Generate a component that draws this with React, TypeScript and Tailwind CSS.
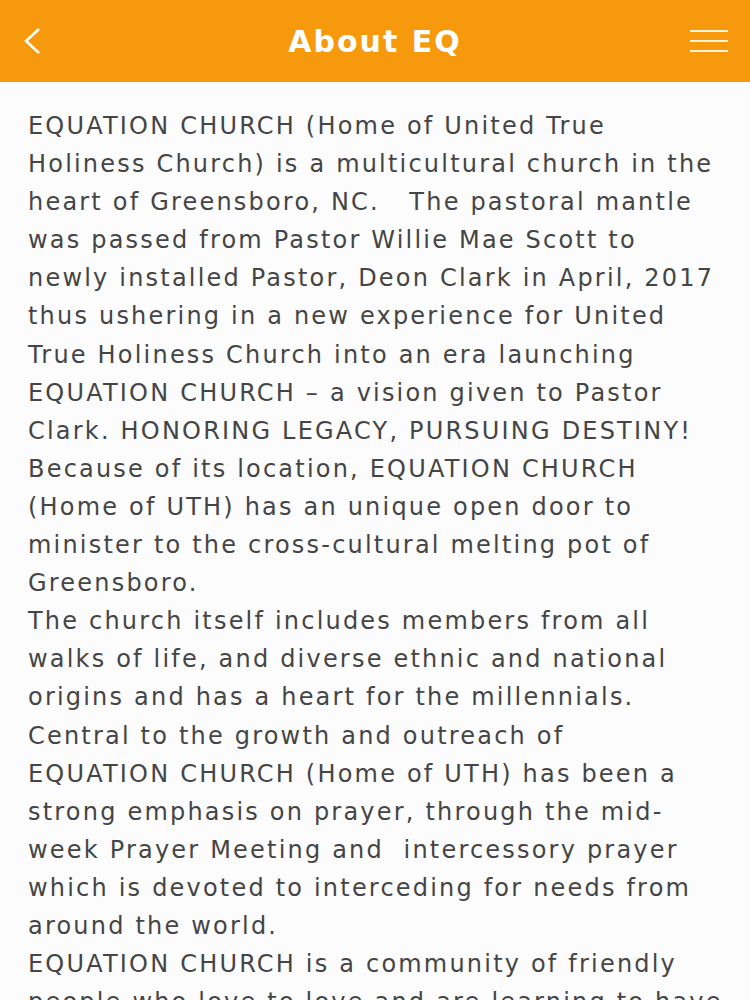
import React from "react";

const lines: string[] = [
    "EQUATION CHURCH (Home of United True",
    "Holiness Church) is a multicultural church in the",
    "heart of Greensboro, NC.   The pastoral mantle",
    "was passed from Pastor Willie Mae Scott to",
    "newly installed Pastor, Deon Clark in April, 2017",
    "thus ushering in a new experience for United",
    "True Holiness Church into an era launching",
    "EQUATION CHURCH – a vision given to Pastor",
    "Clark. HONORING LEGACY, PURSUING DESTINY!",
    "Because of its location, EQUATION CHURCH",
    "(Home of UTH) has an unique open door to",
    "minister to the cross-cultural melting pot of",
    "Greensboro.",
    "The church itself includes members from all",
    "walks of life, and diverse ethnic and national",
    "origins and has a heart for the millennials.",
    "Central to the growth and outreach of",
    "EQUATION CHURCH (Home of UTH) has been a",
    "strong emphasis on prayer, through the mid-",
    "week Prayer Meeting and  intercessory prayer",
    "which is devoted to interceding for needs from",
    "around the world.",
    "EQUATION CHURCH is a community of friendly",
    "people who love to love and are learning to have",
];

export default function App() {
    return (
        <div className="w-[750px] h-[1000px] overflow-hidden bg-[#fcfcfc] font-['DejaVu_Sans',sans-serif]">
            <header className="h-[82px] bg-[#f7990c] flex items-center justify-between px-[22px]">
                <svg width="20" height="28" viewBox="0 0 20 28" fill="none" stroke="#fff" strokeWidth="2.5">
                    <path d="M17 2 L4 14 L17 26" />
                </svg>
                <h1 className="text-white text-[30px] font-bold tracking-[2px] ml-[18px]">About EQ</h1>
                <div className="w-[38px] flex flex-col gap-[8px]">
                    <div className="h-[2px] bg-[#fff3d6]" />
                    <div className="h-[2px] bg-[#fff3d6]" />
                    <div className="h-[2px] bg-[#fff3d6]" />
                </div>
            </header>

            <main className="pt-[25px] pl-[28px] text-[#454545] text-[24px] leading-[38.1px] tracking-[2.2px]">
                {lines.map((line, i) => (
                    <div key={i} className="whitespace-pre">
                        {line}
                    </div>
                ))}
            </main>
        </div>
    );
}
